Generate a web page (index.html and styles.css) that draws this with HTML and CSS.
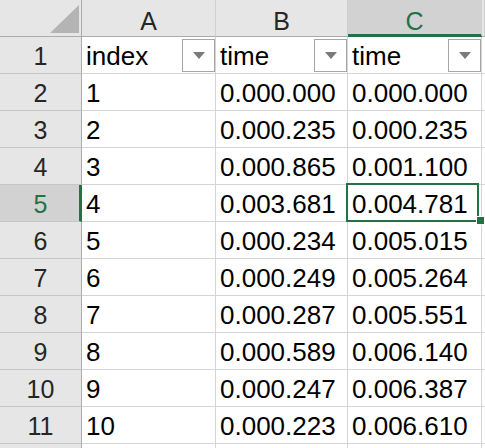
FILE: index.html
```html
<!DOCTYPE html>
<html>
<head>
<meta charset="utf-8">
<link rel="stylesheet" href="styles.css">
</head>
<body>
<div class="sheet">
  <div class="cell corner"><svg class="corner-svg" width="81" height="36" viewBox="0 0 81 36"><polygon points="79,5 79,33 50,33" fill="#b4b4b4"/></svg></div>
  <div class="cell colhead">A</div>
  <div class="cell colhead">B</div>
  <div class="cell colhead sel-col">C</div>
  <div class="cell colhead edge"></div>

  <div class="cell rowhead">1</div>
  <div class="cell data filter"><span>index</span><span class="btn"><span class="tri"></span></span></div>
  <div class="cell data filter"><span>time</span><span class="btn"><span class="tri"></span></span></div>
  <div class="cell data filter"><span>time</span><span class="btn"><span class="tri"></span></span></div>
  <div class="cell data edge"></div>

  <div class="cell rowhead">2</div>
  <div class="cell data">1</div><div class="cell data">0.000.000</div><div class="cell data">0.000.000</div><div class="cell data edge"></div>

  <div class="cell rowhead">3</div>
  <div class="cell data">2</div><div class="cell data">0.000.235</div><div class="cell data">0.000.235</div><div class="cell data edge"></div>

  <div class="cell rowhead">4</div>
  <div class="cell data">3</div><div class="cell data">0.000.865</div><div class="cell data">0.001.100</div><div class="cell data edge"></div>

  <div class="cell rowhead sel-row">5</div>
  <div class="cell data">4</div><div class="cell data">0.003.681</div><div class="cell data active">0.004.781</div><div class="cell data edge"></div>

  <div class="cell rowhead">6</div>
  <div class="cell data">5</div><div class="cell data">0.000.234</div><div class="cell data">0.005.015</div><div class="cell data edge"></div>

  <div class="cell rowhead">7</div>
  <div class="cell data">6</div><div class="cell data">0.000.249</div><div class="cell data">0.005.264</div><div class="cell data edge"></div>

  <div class="cell rowhead">8</div>
  <div class="cell data">7</div><div class="cell data">0.000.287</div><div class="cell data">0.005.551</div><div class="cell data edge"></div>

  <div class="cell rowhead">9</div>
  <div class="cell data">8</div><div class="cell data">0.000.589</div><div class="cell data">0.006.140</div><div class="cell data edge"></div>

  <div class="cell rowhead">10</div>
  <div class="cell data">9</div><div class="cell data">0.000.247</div><div class="cell data">0.006.387</div><div class="cell data edge"></div>

  <div class="cell rowhead">11</div>
  <div class="cell data">10</div><div class="cell data">0.000.223</div><div class="cell data">0.006.610</div><div class="cell data edge"></div>

  <div class="cell rowhead last"></div>
  <div class="cell data last"></div><div class="cell data last"></div><div class="cell data last"></div><div class="cell data edge last"></div>
</div>
</body>
</html>
```
FILE: styles.css
```css
html, body {
  margin: 0;
  padding: 0;
  background: #ffffff;
  overflow: hidden;
}

body {
  width: 485px;
  height: 448px;
  font-family: "Liberation Sans", Arial, sans-serif;
}

.sheet {
  display: grid;
  grid-template-columns: 82px 134px 132px 134px 3px;
  grid-template-rows: repeat(12, 37px) 4px;
  width: 485px;
  height: 448px;
}

.cell {
  box-sizing: border-box;
  display: flex;
  align-items: center;
  font-size: 26px;
  color: #000000;
  white-space: nowrap;
  border-right: 1px solid #d4d4d4;
  border-bottom: 1px solid #d4d4d4;
  overflow: hidden;
}

.edge {
  border-right: 0;
}

.last {
  border-bottom: 0;
}

.corner {
  background: #e6e6e6;
  border-right: 1px solid #ababab;
  border-bottom: 1px solid #ababab;
  padding: 0;
}

.corner-svg {
  display: block;
}

.colhead {
  background: #e6e6e6;
  justify-content: center;
  color: #262626;
  font-size: 25px;
  padding-top: 6px;
  border-right: 1px solid #d0d0d0;
  border-bottom: 1px solid #ababab;
}

.sel-col {
  background: #d2d2d2;
  color: #217346;
  border-bottom: 3px solid #217346;
  padding-top: 8px;
  border-right-color: #d2d2d2;
}

.rowhead {
  background: #e6e6e6;
  justify-content: center;
  color: #262626;
  font-size: 25px;
  padding-top: 2px;
  border-right: 1px solid #ababab;
  border-bottom: 1px solid #c6c6c6;
}

.rowhead.last {
  border-bottom: 0;
}

.sel-row {
  background: #d2d2d2;
  color: #217346;
  border-right: 3px solid #217346;
  padding-left: 2px;
}

.data {
  padding: 2px 0 0 4px;
}

.edge.data {
  padding: 0;
}

.filter {
  justify-content: space-between;
  padding-right: 0;
}

.btn {
  box-sizing: border-box;
  width: 33px;
  height: 33px;
  margin-top: -2px;
  border: 1px solid #a6a6a6;
  background: #ffffff;
  display: flex;
  align-items: center;
  justify-content: center;
  flex-shrink: 0;
}

.tri {
  width: 0;
  height: 0;
  border-left: 6px solid transparent;
  border-right: 6px solid transparent;
  border-top: 7px solid #7a7a7a;
  margin-top: 1px;
}

.active {
  position: relative;
  overflow: visible;
}

.active::after {
  content: "";
  position: absolute;
  left: -2px;
  top: -2px;
  width: 133px;
  height: 39px;
  box-sizing: border-box;
  border: 2px solid #217346;
  z-index: 2;
}

.active::before {
  content: "";
  position: absolute;
  left: 129px;
  top: 32px;
  width: 7px;
  height: 7px;
  background: #217346;
  box-shadow: 0 0 0 1px #ffffff;
  z-index: 3;
}
```
